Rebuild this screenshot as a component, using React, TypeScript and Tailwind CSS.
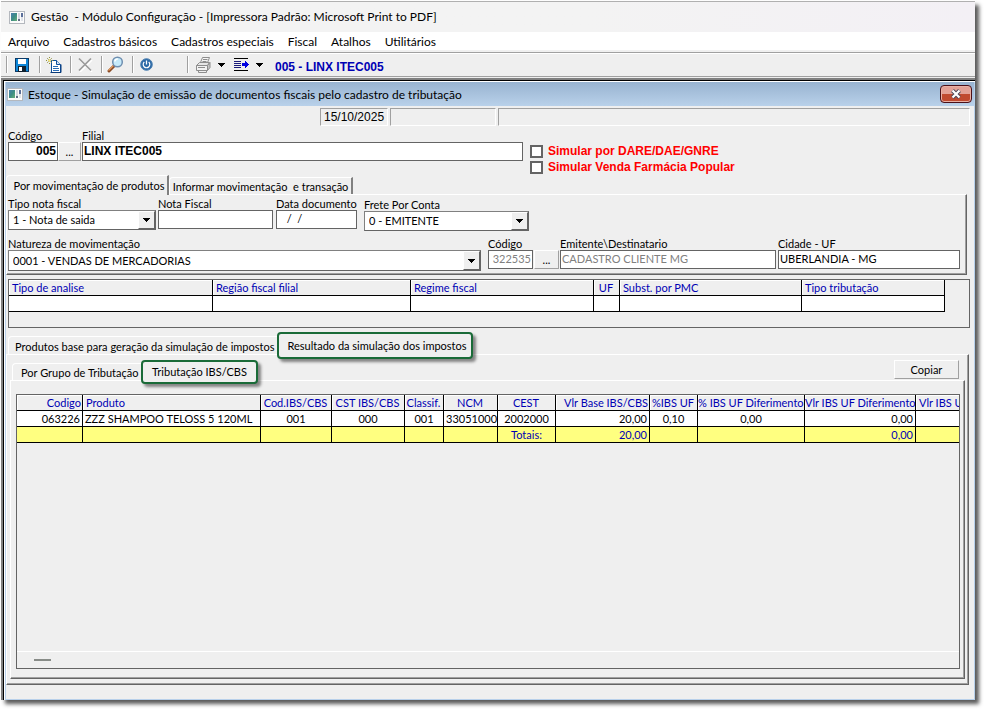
import { ReactNode } from "react";
import clsx from "clsx";

const menus = [
  "Arquivo",
  "Cadastros básicos",
  "Cadastros especiais",
  "Fiscal",
  "Atalhos",
  "Utilitários",
];

const analysisColumns = [
  { title: "Tipo de analise", width: "w-[204px]" },
  { title: "Região fiscal filial", width: "w-[198px]" },
  { title: "Regime fiscal", width: "w-[183px]" },
  { title: "UF", width: "w-[26px]", align: "text-center" },
  { title: "Subst. por PMC", width: "w-[182px]" },
  { title: "Tipo tributação", width: "w-[143px]" },
];

interface TaxColumn {
  title: string;
  width: string;
  head?: string;
  body?: string;
  value: string;
  total?: string;
}

const taxColumns: TaxColumn[] = [
  { title: "Codigo", width: "w-[66px]", head: "text-right", body: "text-right", value: "063226" },
  { title: "Produto", width: "w-[178px]", value: "ZZZ SHAMPOO TELOSS 5 120ML" },
  { title: "Cod.IBS/CBS", width: "w-[71px]", head: "text-center", body: "text-center", value: "001" },
  { title: "CST IBS/CBS", width: "w-[73px]", head: "text-center", body: "text-center", value: "000" },
  { title: "Classif.", width: "w-[39px]", head: "text-center", body: "text-center", value: "001" },
  { title: "NCM", width: "w-[54px]", head: "text-center", body: "text-center", value: "33051000" },
  { title: "CEST", width: "w-[58px]", head: "text-center", body: "text-center", value: "2002000", total: "Totais:" },
  { title: "Vlr Base IBS/CBS", width: "w-[94px]", head: "text-right", body: "text-right", value: "20,00", total: "20,00" },
  { title: "%IBS UF", width: "w-[48px]", head: "text-center", body: "text-center", value: "0,10" },
  { title: "% IBS UF Diferimento", width: "w-[107px]", head: "text-center", body: "text-center", value: "0,00" },
  { title: "Vlr IBS UF Diferimento", width: "w-[111px]", head: "text-right", body: "text-right", value: "0,00", total: "0,00" },
  { title: "Vlr IBS UF", width: "w-[90px]", value: "" },
];

const WindowIcon = () => (
  <svg width="16" height="13" viewBox="0 0 16 13" shapeRendering="crispEdges">
    <defs>
      <linearGradient id="pane" x1="0" y1="0" x2="1" y2="1">
        <stop offset="0" stopColor="#4a7fb0" />
        <stop offset="0.5" stopColor="#3c8c84" />
        <stop offset="1" stopColor="#6ab07a" />
      </linearGradient>
    </defs>
    <rect x="0.5" y="0.5" width="15" height="12" fill="#fbfbfb" stroke="#b4b8be" />
    <rect x="2" y="2" width="6" height="8" fill="url(#pane)" />
    <rect x="9" y="2" width="2" height="6" fill="#d3d8e0" />
    <rect x="9" y="8" width="2" height="2" fill="#5f6f86" />
    <rect x="12" y="2" width="2" height="4" fill="#5b6f9a" />
    <rect x="12" y="6" width="2" height="4" fill="#dfe2e8" />
  </svg>
);

const SaveIcon = () => (
  <svg width="14" height="14" viewBox="0 0 14 14" shapeRendering="crispEdges">
    <rect width="14" height="14" fill="#0d3a66" />
    <rect x="1" y="1" width="12" height="12" fill="#0c86d8" />
    <rect x="3" y="1" width="8" height="5" fill="#fff" />
    <rect x="3" y="8" width="8" height="6" fill="#10202e" />
    <rect x="4" y="9" width="3" height="4" fill="#fff" />
  </svg>
);

const NewIcon = () => (
  <svg width="16" height="16" viewBox="0 0 16 16">
    <path d="M5.500 3.500h5l4 4v8h-9z" fill="#fff" stroke="#0b4f9c" />
    <path d="M10.500 3.500v4h4" fill="#cfe2f6" stroke="#0b4f9c" />
    <path d="M7 9.500h5M7 11.500h6M7 13.500h6" stroke="#2a6db5" />
    <path d="M3.500 0v7M0 3.500h7M1 1l5 5M6 1L1 6" stroke="#8f8f3c" strokeDasharray="1 1" />
    <path d="M2 3.500h3M3.500 2v3" stroke="#f2e27a" />
    <path d="M4.500 15.500h10.500v-8" stroke="#0a3a78" fill="none" />
  </svg>
);

const DeleteIcon = () => (
  <svg width="15" height="15" viewBox="0 0 15 15">
    <path d="M2 3l12 12M14 3L2 15" stroke="#fff" strokeWidth="1.500" />
    <path d="M1 1.500l12 12M13 1.500l-12 12" stroke="#9b9b9b" strokeWidth="1.700" fill="none" />
  </svg>
);

const SearchIcon = () => (
  <svg width="17" height="17" viewBox="0 0 17 17">
    <path d="M7 10l-5 5" stroke="#8a4a24" strokeWidth="3" strokeLinecap="round" />
    <path d="M6.500 9.500l-5 5" stroke="#e29a60" strokeWidth="1.200" />
    <circle cx="10.500" cy="6" r="4.800" fill="#c6eafa" stroke="#6f8fb0" strokeWidth="1.500" />
    <path d="M7.800 5.500a3 3 0 013-2.500" stroke="#fff" strokeWidth="1.500" fill="none" />
  </svg>
);

const PowerIcon = () => (
  <svg width="13" height="13" viewBox="0 0 13 13">
    <circle cx="6.500" cy="6.500" r="5.800" fill="#2a68a6" stroke="#4d7faf" />
    <path d="M4.300 4a3.300 3.300 0 104.400 0" stroke="#fff" strokeWidth="1.200" fill="none" />
    <path d="M6.500 2.500v4" stroke="#fff" strokeWidth="1.300" />
  </svg>
);

const PrinterIcon = () => (
  <svg width="17" height="16" viewBox="0 0 17 16" fill="none" stroke="#8d8d8d">
    <path d="M5.500 5.500l2-5h7l-2 5" fill="#f6f6f6" />
    <path d="M8 2.500h4.500M7.500 4.500h4" />
    <path d="M1.500 8.500l3-3h10l-2 3z" fill="#e6e6e6" />
    <path d="M1.500 8.500h11v5h-11z" fill="#f2f2f2" />
    <path d="M12.500 8.500l2.500-3v5l-2.500 3z" fill="#c4c4c4" />
    <path d="M3 10.500h7M3.500 13.500v2h8v-2" />
  </svg>
);

const ExportIcon = () => (
  <svg width="16" height="14" viewBox="0 0 16 14" shapeRendering="crispEdges">
    <path d="M0 0.500h14M0 12.500h14" stroke="#000" />
    <path d="M0 3.500h7M0 5.500h7M0 7.500h7M0 9.500h7" stroke="#1a1a7a" />
    <path d="M8 5h3V3h1v1h1v1h1v1h1v1h-1v1h-1v1h-1v1h-1V8H8z" fill="#0000e0" />
  </svg>
);

const DownArrow = () => (
  <svg width="7" height="4" viewBox="0 0 7 4" shapeRendering="crispEdges">
    <path d="M0 0h7v1H6v1H5v1H4v1H3V3H2V2H1V1H0z" fill="#000" />
  </svg>
);

const Separator = () => <span className="h-[17px] w-px bg-[#a0a0a0] shadow-[1px_0_#fff]" />;

const ToolButton = ({ label, children }: { label: string; children: ReactNode }) => (
  <button aria-label={label} className="flex h-[22px] items-center justify-center">
    {children}
  </button>
);

interface FieldProps {
  id: string;
  label: string;
  className?: string;
  children: ReactNode;
}

const Field = ({ id, label, className, children }: FieldProps) => (
  <div className={clsx("flex flex-col", className)}>
    <label htmlFor={id} className="h-[13px] whitespace-nowrap leading-[14px]">
      {label}
    </label>
    {children}
  </div>
);

const inputClass = "h-[19px] w-full border border-[#646464] bg-white px-px pb-[2px] outline-none";
const boldClass = "font-['Liberation_Sans',Arial,sans-serif] text-[12px] font-bold";

const LookupButton = ({ className }: { className?: string }) => (
  <button
    aria-label="Pesquisar"
    className={clsx(
      "mt-[13px] h-[19px] shrink-0 border border-t-white border-l-white border-r-[#a0a0a0] border-b-[#a0a0a0] leading-[14px]",
      className,
    )}
  >
    ...
  </button>
);

const SelectBox = ({ id, value, className }: { id: string; value: string; className?: string }) => (
  <div className={clsx("relative border border-t-[#808080] border-l-[#808080] border-r-[#646464] border-b-[#646464] bg-white", className)}>
    <select id={id} className="h-full w-full appearance-none bg-white pr-5 pl-1 outline-none">
      <option>{value}</option>
    </select>
    <span className="pointer-events-none absolute inset-y-0 right-0 flex w-[17px] items-center justify-center border border-t-white border-l-white border-r-[#646464] border-b-[#646464] bg-[#efefef]">
      <DownArrow />
    </span>
  </div>
);

const headCell =
  "h-4 border-r border-b border-black pr-px font-normal whitespace-nowrap text-[#0000b4] shadow-[inset_1px_1px_#fff]";
const bodyCell = "h-4 border-r border-b border-black px-[2px] whitespace-nowrap";

const panelClass =
  "border border-t-white border-l-white border-r-[#646464] border-b-[#646464] shadow-[inset_-1px_-1px_#a0a0a0]";
const tabClass = "border-t border-l border-white whitespace-nowrap rounded-tl-sm";
const activeTabClass =
  "relative z-10 shrink-0 whitespace-nowrap rounded border-2 border-[#1a6b38] bg-[#efefef] shadow-[3px_3px_3px_rgba(0,0,0,0.45)]";

const Toolbar = () => (
  <div className="flex h-[25px] items-center border-y border-[#a0a0a0] bg-[#efefef] pl-[5px] shadow-[inset_0_1px_#fff]">
    <Separator />
    <div className="flex w-8 pl-2">
      <ToolButton label="Salvar"><SaveIcon /></ToolButton>
    </div>
    <Separator />
    <div className="flex w-[30px] pl-[6px]">
      <ToolButton label="Novo"><NewIcon /></ToolButton>
    </div>
    <Separator />
    <div className="flex w-[30px] pl-[7px]">
      <ToolButton label="Excluir"><DeleteIcon /></ToolButton>
    </div>
    <Separator />
    <div className="flex w-[30px] pl-[5px]">
      <ToolButton label="Localizar"><SearchIcon /></ToolButton>
    </div>
    <Separator />
    <div className="flex w-[54px] pl-[7px]">
      <ToolButton label="Sair"><PowerIcon /></ToolButton>
    </div>
    <Separator />
    <div className="flex items-center pl-[7px]">
      <ToolButton label="Imprimir"><PrinterIcon /></ToolButton>
      <button aria-label="Opções de impressão" className="ml-[2px] px-1"><DownArrow /></button>
      <div className="ml-[5px] flex">
        <ToolButton label="Exportar"><ExportIcon /></ToolButton>
      </div>
      <button aria-label="Opções de exportação" className="ml-[2px] px-1"><DownArrow /></button>
    </div>
    <span className={clsx(boldClass, "ml-2 pt-1 leading-[14px] text-[#0000b4]")}>005 - LINX ITEC005</span>
  </div>
);

const statusCell = "border border-t-[#a0a0a0] border-l-[#a0a0a0] border-r-white border-b-white";

const StatusRow = () => (
  <div className="mt-[2px] mr-1 ml-[314px] flex h-[18px] gap-[2px] font-['Liberation_Sans',Arial,sans-serif] text-[12px]">
    <div className={clsx(statusCell, "w-[68px] pl-[3px] leading-4")}>15/10/2025</div>
    <div className={clsx(statusCell, "w-[106px]")} />
    <div className={clsx(statusCell, "flex-1")} />
  </div>
);

const BranchRow = () => (
  <div className="mt-[3px] flex h-[45px] items-start pl-[2px]">
    <Field id="codigo" label="Código" className="w-[50px]">
      <input id="codigo" defaultValue="005" className={clsx(inputClass, boldClass, "text-right")} />
    </Field>
    <LookupButton className="w-[23px]" />
    <Field id="filial" label="Filial" className="ml-px w-[441px]">
      <input id="filial" defaultValue="LINX ITEC005" className={clsx(inputClass, boldClass)} />
    </Field>
    <div className={clsx(boldClass, "ml-[7px] flex flex-col gap-[2px] pt-[15px] text-[#ff0000]")}>
      {["Simular por DARE/DAE/GNRE", "Simular Venda Farmácia Popular"].map((text) => (
        <label key={text} className="flex h-[14px] items-center gap-[5px] leading-[14px] whitespace-nowrap">
          <input type="checkbox" className="size-[13px] appearance-none border-2 border-[#646464] bg-white" />
          {text}
        </label>
      ))}
    </div>
  </div>
);

const MovementPanel = () => (
  <>
    <div className="mt-px flex h-[19px] items-end">
      <button className={clsx(tabClass, "relative -mb-px h-5 w-[163px] border-r-2 border-r-[#808080] bg-[#efefef] pt-px pl-1")}>
        Por movimentação de produtos
      </button>
      <button className={clsx(tabClass, "h-[17px] w-[184px] border-r-2 border-r-[#808080] pt-px whitespace-pre")}>
        Informar movimentação  e transação
      </button>
    </div>
    <div className={clsx(panelClass, "mr-[7px] pt-[2px] pb-[3px] pl-px")}>
      <div className="flex h-[34px] items-start">
        <Field id="tipo" label="Tipo nota fiscal" className="w-[148px]">
          <SelectBox id="tipo" value="1 - Nota de saida" className="h-5" />
        </Field>
        <Field id="nota" label="Nota Fiscal" className="ml-[2px] w-[115px]">
          <input id="nota" className={inputClass} />
        </Field>
        <Field id="data" label="Data documento" className="ml-[3px] w-[81px]">
          <input id="data" defaultValue="  /  /" className={clsx(inputClass, "pl-1")} />
        </Field>
        <Field id="frete" label="Frete Por Conta" className="ml-[7px] w-[165px] pt-px">
          <SelectBox id="frete" value="0 - EMITENTE" className="h-5" />
        </Field>
      </div>
      <div className="mt-[6px] flex h-[34px] items-start pr-[6px]">
        <Field id="natureza" label="Natureza de movimentação" className="w-[473px]">
          <SelectBox id="natureza" value="0001 - VENDAS DE MERCADORIAS" className="h-[21px]" />
        </Field>
        <Field id="destCodigo" label="Código" className="ml-[7px] w-[45px]">
          <input id="destCodigo" defaultValue="322535" readOnly className={clsx(inputClass, "text-right text-[#808080]")} />
        </Field>
        <LookupButton className="ml-px w-[25px]" />
        <Field id="emitente" label="Emitente\Destinatario" className="ml-px flex-1">
          <input id="emitente" defaultValue="CADASTRO CLIENTE MG" readOnly className={clsx(inputClass, "text-[#808080]")} />
        </Field>
        <Field id="cidade" label="Cidade - UF" className="ml-[2px] w-[182px]">
          <input id="cidade" defaultValue="UBERLANDIA - MG" className={inputClass} />
        </Field>
      </div>
    </div>
  </>
);

const AnalysisTable = () => (
  <div className="mt-1 mr-1 ml-[2px] h-[49px] overflow-hidden border border-[#646464]">
    <table className="w-[936px] table-fixed border-separate border-spacing-0 leading-[14px]">
      <thead>
        <tr>
          {analysisColumns.map((col) => (
            <th key={col.title} className={clsx(headCell, col.width, col.align ?? "pl-[3px] text-left")}>
              {col.title}
            </th>
          ))}
        </tr>
      </thead>
      <tbody>
        <tr className="bg-white">
          {analysisColumns.map((col) => (
            <td key={col.title} className={bodyCell} />
          ))}
        </tr>
      </tbody>
    </table>
  </div>
);

const TaxTable = () => (
  <div className="mt-[13px] mr-1 mb-[9px] ml-[5px] flex min-w-0 flex-1 flex-col overflow-hidden border border-[#646464]">
    <table className="w-[989px] table-fixed border-separate border-spacing-0 leading-[14px]">
      <thead>
        <tr>
          {taxColumns.map((col) => (
            <th key={col.title} className={clsx(headCell, col.width, col.head ?? "pl-[3px] text-left")}>
              {col.title}
            </th>
          ))}
        </tr>
      </thead>
      <tbody>
        <tr className="bg-white">
          {taxColumns.map((col) => (
            <td key={col.title} className={clsx(bodyCell, col.body)}>
              {col.value}
            </td>
          ))}
        </tr>
        <tr className="bg-[#ffff80] text-[#0000b4]">
          {taxColumns.map((col) => (
            <td key={col.title} className={clsx(bodyCell, col.body)}>
              {col.total}
            </td>
          ))}
        </tr>
      </tbody>
    </table>
    <div className="mt-auto h-[17px] border-t border-white pt-[7px] pl-[17px]">
      <div className="h-[2px] w-[17px] bg-[#888c88]" />
    </div>
  </div>
);

const ResultPanel = () => (
  <>
    <div className="mt-1 flex h-[22px] items-start pl-[2px]">
      <button className={clsx(tabClass, "mt-1 h-[18px] w-[269px] pt-[3px] pl-[6px] text-left leading-[14px]")}>
        Produtos base para geração da simulação de impostos
      </button>
      <button className={clsx(activeTabClass, "h-[27px] w-[196px] pl-1")}>Resultado da simulação dos impostos</button>
    </div>
    <div className={clsx(panelClass, "mr-[5px] mb-[14px] flex min-w-0 flex-1 flex-col pr-[3px] pb-[5px] pl-[3px]")}>
      <div className="flex h-[25px] shrink-0 items-start pt-[5px] pr-[6px] pl-[2px]">
        <button className={clsx(tabClass, "mt-[3px] h-[17px] w-[129px] pl-2 text-left leading-[18px]")}>
          Por Grupo de Tributação
        </button>
        <button className={clsx(activeTabClass, "h-6 w-[117px]")}>Tributação IBS/CBS</button>
        <button className="ml-auto h-[19px] w-[65px] border border-t-white border-l-white border-r-[#a0a0a0] border-b-[#a0a0a0]">
          Copiar
        </button>
      </div>
      <div className={clsx(panelClass, "flex min-w-0 flex-1 flex-col")}>
        <TaxTable />
      </div>
    </div>
  </>
);

const ChildWindow = () => (
  <section className="flex flex-1 flex-col border-x border-b border-[#b8d0ea] bg-[#efefef]">
    <div className="flex h-6 shrink-0 items-center bg-linear-to-b from-[#98b3d0] to-[#b9d1ea] pr-[2px] pl-px">
      <WindowIcon />
      <h2 className="ml-[5px] flex-1 pt-px text-[12px]">
        Estoque - Simulação de emissão de documentos fiscais pelo cadastro de tributação
      </h2>
      <button
        aria-label="Fechar"
        className="flex h-[18px] w-8 items-center justify-center rounded-sm border border-[#4a1018] bg-linear-to-b from-[#e3a196] from-50% to-[#c04a30] to-50% shadow-[inset_0_0_0_1px_#e8b0a4]"
      >
        <svg width="12" height="10" viewBox="0 0 12 10">
          <path d="M2.500 1.500l7 7M9.500 1.500l-7 7" stroke="#4a4a5a" strokeWidth="4" />
          <path d="M2.500 1.500l7 7M9.500 1.500l-7 7" stroke="#fff" strokeWidth="2.200" />
        </svg>
      </button>
    </div>
    <StatusRow />
    <BranchRow />
    <MovementPanel />
    <AnalysisTable />
    <ResultPanel />
  </section>
);

export default function App() {
  return (
    <div className="flex min-h-screen flex-col bg-white pt-px pr-[9px] pb-[9px] pl-px font-[Lato,'Liberation_Sans',sans-serif] text-[11px] leading-[14px] text-black">
      <main className="flex flex-1 flex-col bg-[#efefef] shadow-[4px_4px_4px_rgba(0,0,0,0.65)]">
        <header className="flex h-[31px] items-center border-t border-[#b0b0b0] bg-linear-to-r from-[#f3f3f3] from-60% to-[#f3f0f5] pl-2">
          <WindowIcon />
          <h1 className="ml-[6px] text-[12px] whitespace-pre">
            Gestão  - Módulo Configuração - [Impressora Padrão: Microsoft Print to PDF]
          </h1>
        </header>
        <nav className="flex h-5 items-center gap-[14px] border-b-2 border-[#f0f0f0] bg-white pt-[2px] pl-[7px] text-[12px]">
          {menus.map((menu) => (
            <button key={menu} className="whitespace-nowrap">
              {menu}
            </button>
          ))}
        </nav>
        <Toolbar />
        <div className="mt-px flex flex-1 flex-col border-t-2 border-l-2 border-[#808080]">
          <div className="flex flex-1 flex-col border-t border-l border-black bg-white pt-px pl-px">
            <ChildWindow />
          </div>
        </div>
      </main>
    </div>
  );
}
